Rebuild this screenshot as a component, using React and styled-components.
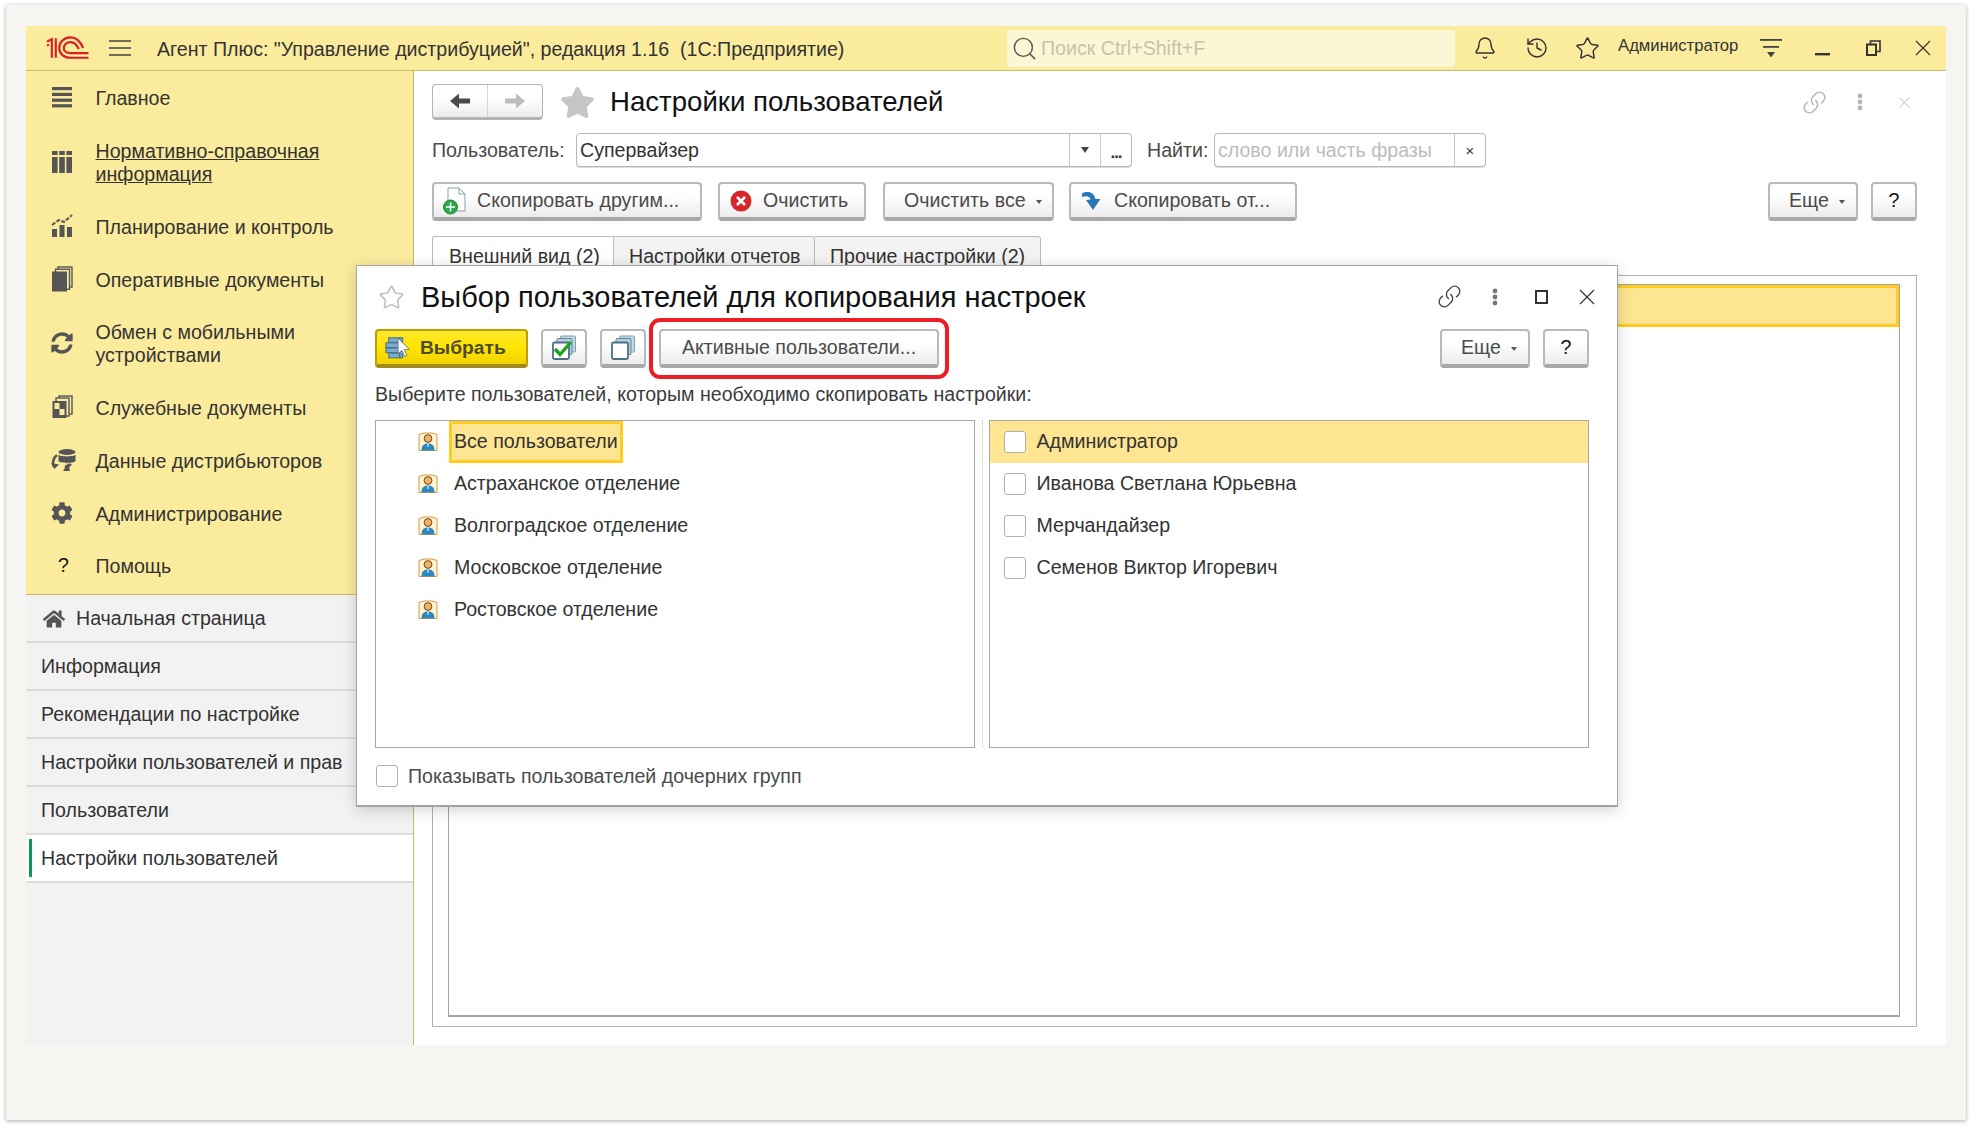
import React from "react";
import styled, { createGlobalStyle } from "styled-components";
import { Bell, History, Star, Link as LinkIcon, Search } from "lucide-react";
import { FaCog, FaHome, FaStar, FaSyncAlt } from "react-icons/fa";

const Global = createGlobalStyle`
  html, body { margin: 0; padding: 0; background: #fff; }
  * { box-sizing: border-box; }
  body { font-family: "Liberation Sans", Arial, sans-serif; font-size: 19.6px; color: #333; }
`;

const Page = styled.div`
  width: 1972px; height: 1126px; padding: 5px 6px 6px; background: #fff; overflow: hidden;
`;
const Paper = styled.div`
  width: 1960px; height: 1115px; background: #f6f5f2; padding: 21px 20px 75px;
  box-shadow: 0 1px 4px rgba(0,0,0,.35);
`;
const AppFrame = styled.div`
  position: relative; width: 1920px; height: 1019px; display: flex; flex-direction: column; background: #fff;
`;

/* header */
const Header = styled.header`
  height: 45px; flex: none; display: flex; align-items: center; background: #fbeb9d;
  border-bottom: 1px solid #cdbb6c; padding-left: 20px;
`;
const BurgerSlot = styled.div`margin-left: 20px; width: 22px; height: 18px; flex: none; display: flex;`;
const AppTitle = styled.div`
  margin-left: 26px; width: 850px; flex: none; padding-top: 2px; color: #333; white-space: pre;
`;
const SearchBox = styled.div`
  width: 448px; height: 37px; flex: none; background: #fdf6d5; border-radius: 2px; display: flex; align-items: center; padding: 1px 0 0 4px; gap: 3px;
  color: #c6c2ae;
`;
const HeadIcons = styled.div`
  flex: 1; display: flex; align-items: center; height: 100%; color: #333;
`;
const HeadSlot = styled.div`
  width: ${p => p.$w}px; padding-left: ${p => p.$pl || 0}px; flex: none; display: flex; justify-content: center; align-items: center;
`;
const UserName = styled.div`
  width: 142px; margin-left: 3px; flex: none; font-size: 16.7px; color: #333; white-space: nowrap; position: relative; top: -2px;
`;

/* body */
const Body = styled.div`flex: 1; display: flex; min-height: 0;`;
const Sidebar = styled.aside`
  width: 388px; flex: none; display: flex; flex-direction: column; background: #f2f2f2;
  border-right: 1px solid #c6b76f;
`;
const MainMenu = styled.nav`
  background: #fbeb9d; border-bottom: 1px solid #c6b76f; height: 524px; flex: none;
`;
const MenuItem = styled.div`
  height: ${p => (p.$tall ? 75.6 : 52.8)}px; display: flex; align-items: center; color: #333; line-height: 23px;
`;
const MenuIcon = styled.div`
  width: 69.5px; padding-left: 25px; flex: none; display: flex; align-items: center; height: 24px; color: #555;
`;
const MenuText = styled.div`
  padding-top: 3px;
  text-decoration: ${p => (p.$link ? "underline" : "none")};
`;
const SectionRow = styled.div`
  height: 48px; flex: none; display: flex; align-items: center; padding: 1px 0 0 ${p => (p.$home ? 17 : 15)}px;
  border-bottom: 2px solid #dcdcdc; color: #333; gap: 11px; position: relative; white-space: nowrap;
  background: ${p => (p.$active ? "#fff" : "transparent")};
`;
const ActiveMark = styled.span`
  position: absolute; left: 3px; top: 4px; bottom: 4px; width: 3px; background: #0a9a50;
`;
const HelpGlyph = styled.span`margin-left: 7px; color: #111;`;

/* main */
const Main = styled.main`
  flex: 1; min-width: 0; display: flex; flex-direction: column; background: #fff; padding: 13px 29px 18px 18px;
`;
const TitleRow = styled.div`height: 36px; flex: none; display: flex; align-items: center;`;
const NavGroup = styled.div`
  width: 111px; height: 36px; display: flex; border: 1px solid #b4b4b4; border-bottom: 3px solid #b4b4b4; border-radius: 4px;
  background: linear-gradient(#fff 40%, #ececec);
`;
const NavBtn = styled.div`
  flex: 1; display: flex; align-items: center; justify-content: center;
  & + & { border-left: 1px solid #d4d4d4; }
`;
const StarSlot = styled.div`
  margin-left: 14px; width: 40px; display: flex; justify-content: center; color: #c6c6c6;
`;
const PageTitle = styled.h1`
  margin: 0 0 0 13px; font-weight: 400; font-size: 27.6px; color: #111; flex: 1; white-space: nowrap;
`;
const Tools = styled.div`
  display: flex; align-items: center; flex: none; color: ${p => p.$color}; margin-right: ${p => p.$mr}px; padding-bottom: ${p => p.$pb || 0}px;
`;
const ToolSlot = styled.div`
  width: ${p => p.$w}px; display: flex; justify-content: center; align-items: center;
`;
const LinkGlyph = styled(LinkIcon)`
  transform: scaleX(-1) rotate(-90deg);
`;
const FieldRow = styled.div`
  height: 34px; flex: none; margin-top: 13px; display: flex; align-items: center; color: #4a4a4a;
`;
const Label = styled.span`width: ${p => p.$w}px; margin-left: ${p => p.$ml || 0}px; flex: none; white-space: nowrap; padding-top: 1px;`;
const Field = styled.div`
  width: ${p => p.$w}px; height: 34px; flex: none; display: flex; align-items: stretch; border: 1px solid #b7b7b7; border-radius: 4px; background: #fff;
  box-shadow: 0 1px 0 #ddd;
`;
const FieldValue = styled.div`
  flex: 1; min-width: 0; padding: 1px 0 0 3px; display: flex; align-items: center; color: ${p => (p.$ph ? "#bcbcbc" : "#333")}; white-space: nowrap;
`;
const FieldBtn = styled.div`
  width: ${p => p.$w}px; flex: none; border-left: 1px solid #c8c8c8; display: flex; align-items: center; justify-content: center; font-size: 15px; color: #333;
`;
const TinyArrow = styled.i`
  display: block; width: 0; height: 0; border: 4px solid transparent; border-top: 6px solid #444; border-bottom: 0;
`;
const Ellipsis = styled.span`font-size: 17px; font-weight: 700; position: relative; top: 3px; letter-spacing: -1px;`;
const CommandRow = styled.div`
  flex: none; margin-top: 15px; height: 39px; display: flex; align-items: stretch;
`;
const Btn = styled.div`
  width: ${p => p.$w}px; flex: none; margin-left: ${p => p.$ml || 0}px; display: flex; align-items: center; justify-content: ${p => (p.$center ? "center" : "flex-start")};
  padding-left: ${p => p.$pl || 0}px; gap: ${p => p.$gap || 0}px;
  border: 2px solid #b9b9b9; border-bottom: 4px solid #a8a8a8; border-radius: 4px;
  background: linear-gradient(#fff 35%, #ececec); color: #4b4b4b; white-space: nowrap;
`;
const PrimaryBtn = styled(Btn)`
  background: linear-gradient(#ffe92e 0%, #ffe400 50%, #f2d200 100%);
  border: 2px solid #b89f0a; border-bottom: 4px solid #a08b1a; font-weight: 700; font-size: 19.2px; color: #4b4b36;
`;
const Spacer = styled.div`flex: 1;`;
const Caret = styled.i`
  display: inline-block; width: 0; height: 0; border: 3.5px solid transparent; border-top: 4px solid #555; border-bottom: 0; margin-left: 10px; position: relative; top: 1px;
`;
const QMark = styled.span`color: #111;`;
const Tabs = styled.div`
  flex: none; margin-top: 15px; height: 40px; display: flex; margin-bottom: -1px; position: relative; z-index: 1;
`;
const Tab = styled.div`
  width: ${p => p.$w}px; flex: none; padding: 8px 0 0 ${p => (p.$active ? 16 : 15)}px;
  background: ${p => (p.$active ? "#fff" : "#f2f2f2")}; color: #333;
  border: 1px solid #bcbcbc; border-left-width: ${p => (p.$active ? 1 : 0)}px;
  border-bottom: ${p => (p.$active ? "1px solid #fff" : "1px solid #bcbcbc")};
  border-radius: ${p => (p.$active ? "3px 0 0 0" : "0 3px 0 0")};
  white-space: nowrap;
`;
const TabPanel = styled.div`
  flex: 1; min-height: 0; border: 1px solid #b0b0b0; padding: 8px 16px 9px 15px; display: flex;
`;
const InnerTable = styled.div`flex: 1; border: 1px solid #a4a4a4; border-bottom-width: 2px;`;
const SelectedWide = styled.div`height: 42px; background: #fde591; border: 3px solid #ffcb1f;`;

/* dialog */
const Dialog = styled.section`
  position: absolute; left: 330px; top: 239px; width: 1262px; height: 542px; z-index: 5; background: #fff;
  border: 1px solid #a3a3a3; border-bottom-width: 2px; box-shadow: 0 3px 14px rgba(0,0,0,.18);
  padding: 0 28px 0 18px; display: flex; flex-direction: column;
`;
const DialogHead = styled.div`height: 63px; flex: none; display: flex; align-items: center; padding-left: 3px;`;
const DialogTitle = styled.h2`
  margin: 0 0 0 16px; font-weight: 400; font-size: 29px; color: #111; flex: 1; white-space: nowrap;
`;
const DialogToolbar = styled.div`height: 39px; flex: none; display: flex; align-items: stretch;`;
const HighlightWrap = styled.div`
  position: relative; display: flex; margin-left: 13px;
`;
const RedFrame = styled.div`
  position: absolute; left: -10px; right: -10px; top: -11px; bottom: -11px; border: 4px solid #ee1c25; border-radius: 11px; pointer-events: none;
`;
const Hint = styled.div`
  flex: none; margin-top: 15px; height: 23px; line-height: 23px; color: #3c3c3c; white-space: nowrap;
`;
const Columns = styled.div`
  flex: none; margin-top: 14px; height: 328px; display: flex; justify-content: space-between;
`;
const ListBox = styled.div`
  width: ${p => p.$w}px; border: 1px solid #a8a8a8; display: flex; flex-direction: column;
`;
const Splitter = styled.div`
  width: 0; margin-left: 7px; margin-right: 6px; border-left: 1px dotted #c4c4c4;
`;
const GroupRow = styled.div`
  height: 42px; flex: none; display: flex; align-items: center; padding-left: 42px; gap: 16px;
`;
const GroupText = styled.div`
  white-space: nowrap; padding-bottom: 1px;
  ${p => p.$sel && "background:#fde591; border:3px solid #ffcb1f; height: 42px; line-height: 35px; margin-left: -5px; padding-left: 2px; width: 174px;"}
`;
const UserRow = styled.div`
  height: 42px; flex: none; display: flex; align-items: center; padding: 0 0 1px 14px; gap: 11px; background: ${p => (p.$sel ? "#fde591" : "transparent")};
`;
const Check = styled.div`
  width: 22px; height: 22px; flex: none; border: 1px solid #b0b0b0; border-radius: 3px; background: #fff;
`;
const FooterRow = styled.div`
  flex: none; height: 28px; margin-top: 14px; display: flex; align-items: center; padding-left: 1px; gap: 10px; color: #4a4a4a;
`;

/* drawings */
const Logo1C = () => (
  <svg width="44" height="24" viewBox="0 0 44 24" fill="none" stroke="#dc1f26" strokeWidth="2.2">
    <path d="M1 5.5 L6 3 V22" />
    <path d="M1 9.5 L3 8.6" />
    <path d="M10 2 V22" />
    <path d="M38 12 C35 5 30 1.2 25 1.2 C18.5 1.2 13.5 6 13.5 12 C13.5 18 18.5 22 25 22 H43.5" />
    <path d="M33.5 13 C31.5 8.5 28.5 6 25 6 C21 6 18.2 8.8 18.2 12 C18.2 15.2 21 17.3 25 17.3 H43.5" />
  </svg>
);
const Burger = () => (
  <svg width="22" height="18" viewBox="0 0 22 18" stroke="#444" strokeWidth="1.6">
    <path d="M0 2 H22 M0 9 H22 M0 16 H22" />
  </svg>
);
const MenuList = () => (
  <svg width="22" height="22" viewBox="0 0 22 22" fill="#555">
    <rect x="1" y="1" width="20" height="3.2" /><rect x="1" y="6.8" width="20" height="3.2" /><rect x="1" y="12.6" width="20" height="3.2" /><rect x="1" y="18.2" width="20" height="3.2" />
  </svg>
);
const MenuTable = () => (
  <svg width="22" height="24" viewBox="0 0 22 24" fill="#555">
    <rect x="1" y="1" width="5.6" height="4" /><rect x="8.2" y="1" width="5.6" height="4" /><rect x="15.4" y="1" width="5.6" height="4" />
    <rect x="1" y="7" width="5.6" height="16" /><rect x="8.2" y="7" width="5.6" height="16" /><rect x="15.4" y="7" width="5.6" height="16" />
  </svg>
);
const MenuChart = () => (
  <svg width="22" height="24" viewBox="0 0 22 24" fill="#555">
    <rect x="1" y="15" width="5" height="8" /><rect x="8.5" y="11" width="5" height="12" /><rect x="16" y="13" width="5" height="10" />
    <path d="M1 11 L8 6 L13 8 L21 1" fill="none" stroke="#555" strokeWidth="2" strokeDasharray="4 1.5" />
  </svg>
);
const MenuDocs = () => (
  <svg width="22" height="26" viewBox="0 0 22 26" fill="none">
    <rect x="7" y="1" width="14" height="20" stroke="#555" strokeWidth="1.4" />
    <rect x="4.5" y="3.2" width="14" height="20" stroke="#555" strokeWidth="1.4" fill="#fbeb9d" />
    <rect x="1" y="5.5" width="15" height="20" fill="#555" />
  </svg>
);
const MenuService = () => (
  <svg width="22" height="24" viewBox="0 0 22 24" fill="none">
    <rect x="8" y="1" width="13" height="18" stroke="#555" strokeWidth="1.4" />
    <rect x="5" y="3" width="13" height="18" stroke="#555" strokeWidth="1.4" fill="#fbeb9d" />
    <rect x="1.5" y="6" width="14" height="17" fill="#555" />
    <rect x="3.5" y="8" width="5" height="6" fill="#fbeb9d" />
    <rect x="8.5" y="14" width="5" height="6" fill="#fbeb9d" />
  </svg>
);
const MenuData = () => (
  <svg width="26" height="24" viewBox="0 0 26 24" fill="none">
    <ellipse cx="16" cy="4" rx="8.5" ry="3" fill="#555" />
    <path d="M7.5 6.5 C9 9 23 9 24.5 6.5 V13 C23 15.5 9 15.5 7.5 13 Z" fill="#555" />
    <path d="M6 7 C2 10 1 15 3 19" stroke="#555" strokeWidth="2.6" />
    <path d="M0 15 L3.5 21 L8 16.5 Z" fill="#555" />
    <path d="M14 18 C16 19 18 18 20 16" stroke="#555" strokeWidth="2.6" />
    <path d="M12 23 L19 23 L17 15 Z" fill="#555" />
  </svg>
);
const Arrow = () => (
  <svg width="22" height="18" viewBox="0 0 22 18" fill="#4a4a4a">
    <path d="M1 9 L10 1.5 V6.5 H21 V11.5 H10 V16.5 Z" />
  </svg>
);
const ArrowR = () => (
  <svg width="22" height="18" viewBox="0 0 22 18" fill="#bcbcbc">
    <path d="M21 9 L12 1.5 V6.5 H1 V11.5 H12 V16.5 Z" />
  </svg>
);
const Dots = ({ color }) => (
  <svg width="6" height="18" viewBox="0 0 6 18" fill={color}>
    <circle cx="3" cy="3" r="2.4" /><circle cx="3" cy="9" r="2.4" /><circle cx="3" cy="15" r="2.4" />
  </svg>
);
const ThinX = ({ size, color }) => (
  <svg width={size} height={size} viewBox="0 0 16 16" stroke={color} strokeWidth="1.2" fill="none">
    <path d="M1 1 L15 15 M15 1 L1 15" />
  </svg>
);
const FilterLines = () => (
  <svg width="22" height="20" viewBox="0 0 22 20" fill="#444">
    <rect x="0" y="1" width="22" height="1.8" /><rect x="3" y="8" width="16" height="1.8" />
    <path d="M7 14 H15 L11 19.5 Z" />
  </svg>
);
const Minimize = () => <svg width="15" height="16" viewBox="0 0 15 16"><rect y="13" width="15" height="2.4" fill="#333" /></svg>;
const Restore = () => (
  <svg width="15" height="16" viewBox="0 0 15 16" fill="none" stroke="#333">
    <rect x="1" y="4.5" width="9" height="10.5" strokeWidth="2" />
    <path d="M4.5 4 V1 H14 V11.5 H11" strokeWidth="1.6" />
  </svg>
);
const Maximize = () => (
  <svg width="13" height="14" viewBox="0 0 13 14" fill="none" stroke="#333" strokeWidth="2"><rect x="1" y="1" width="11" height="12" /></svg>
);
const DocPlus = () => (
  <svg width="24" height="28" viewBox="0 0 24 28" fill="none">
    <path d="M5 1 H16 L22 7 V24 H5 Z" fill="#fff" stroke="#8aa0ad" />
    <path d="M16 1 V7 H22" stroke="#8aa0ad" />
    <circle cx="7.5" cy="20" r="7" fill="#2fa84a" stroke="#1f8a39" />
    <path d="M7.5 15.5 V24.5 M3 20 H12" stroke="#fff" strokeWidth="1.5" />
  </svg>
);
const RedX = () => (
  <svg width="22" height="22" viewBox="0 0 22 22">
    <circle cx="11" cy="11" r="10.5" fill="#d7252c" />
    <path d="M7 7 L15 15 M15 7 L7 15" stroke="#fff" strokeWidth="2.6" />
  </svg>
);
const BlueTurn = () => (
  <svg width="22" height="22" viewBox="0 0 22 22">
    <path d="M1 3.5 C7 0.5 13 2 14.5 9 L19.5 9 L12 20 L5 10 L9.5 9.5 C9 6.5 5 5.5 1 7 Z" fill="#2878b5" />
  </svg>
);
const SelectIcon = () => (
  <svg width="28" height="24" viewBox="0 0 30 24">
    <g fill="#7cabcd" stroke="#3d6c8e">
      <rect x="4" y="1" width="12" height="5" /><rect x="1" y="6.5" width="15" height="5" /><rect x="1" y="12" width="15" height="5" /><rect x="4" y="17.5" width="12" height="5" />
      <rect x="16" y="1" width="3" height="21.5" />
    </g>
    <path d="M14 1.5 V18 L18 14.5 L21 21 L23.5 20 L20.5 13.5 L26 13.5 Z" fill="#fff" stroke="#777" strokeWidth="1" />
  </svg>
);
const StackCheck = () => (
  <svg width="26" height="26" viewBox="0 0 26 26" fill="none">
    <rect x="9.5" y="1" width="15" height="16" rx="1" fill="#c5d6e1" stroke="#7fa0b5" />
    <rect x="6" y="3.5" width="15" height="16" rx="1" fill="#b9cedb" stroke="#5f89a3" />
    <rect x="2" y="7.5" width="16" height="16.5" rx="1.5" fill="#fff" stroke="#4c6f86" strokeWidth="1.8" />
    <path d="M4 14 L9 19.5 L20 7" stroke="#1da41f" strokeWidth="3.4" />
  </svg>
);
const StackPlain = () => (
  <svg width="26" height="26" viewBox="0 0 26 26" fill="none">
    <rect x="9.5" y="1" width="15" height="16" rx="1" fill="#c5d6e1" stroke="#7fa0b5" />
    <rect x="6" y="3.5" width="15" height="16" rx="1" fill="#b9cedb" stroke="#5f89a3" />
    <rect x="2" y="7.5" width="16" height="16.5" rx="1.5" fill="#fff" stroke="#4c6f86" strokeWidth="1.8" />
  </svg>
);
const PersonIcon = () => (
  <svg width="20" height="20" viewBox="0 0 20 20" fill="none">
    <path d="M1 2.5 L6 1 H14 L19 2.5 V18.5 H1 Z" fill="#fff3d2" stroke="#d89a3d" />
    <circle cx="10" cy="6.5" r="3.9" fill="#f0b060" stroke="#5a3d20" strokeWidth="0.9" />
    <path d="M3.5 18.5 C3.5 13 6.5 11.5 10 11.5 C13.5 11.5 16.5 13 16.5 18.5 Z" fill="#2c88c0" />
    <path d="M10 11.5 V15" stroke="#fff" strokeWidth="1" />
  </svg>
);

const groups = ["Все пользователи", "Астраханское отделение", "Волгоградское отделение", "Московское отделение", "Ростовское отделение"];
const users = ["Администратор", "Иванова Светлана Юрьевна", "Мерчандайзер", "Семенов Виктор Игоревич"];

export default function App() {
  return (
    <Page>
      <Global />
      <Paper>
        <AppFrame>
          <Header>
            <Logo1C />
            <BurgerSlot><Burger /></BurgerSlot>
            <AppTitle>{'Агент Плюс: "Управление дистрибуцией", редакция 1.16  (1С:Предприятие)'}</AppTitle>
            <SearchBox>
              <Search size={27} strokeWidth={1.3} color="#555" />
              <span>Поиск Ctrl+Shift+F</span>
            </SearchBox>
            <HeadIcons>
              <HeadSlot $w={60}><Bell size={24} strokeWidth={1.4} /></HeadSlot>
              <HeadSlot $w={44}><History size={24} strokeWidth={1.4} /></HeadSlot>
              <HeadSlot $w={56}><Star size={25} strokeWidth={1.4} /></HeadSlot>
              <UserName>Администратор</UserName>
              <HeadSlot $w={22}><FilterLines /></HeadSlot>
              <HeadSlot $w={80}><Minimize /></HeadSlot>
              <HeadSlot $w={22}><Restore /></HeadSlot>
              <HeadSlot $w={62} $pl={16}><ThinX size={16} color="#333" /></HeadSlot>
            </HeadIcons>
          </Header>
          <Body>
            <Sidebar>
              <MainMenu>
                <MenuItem><MenuIcon><MenuList /></MenuIcon><MenuText>Главное</MenuText></MenuItem>
                <MenuItem $tall><MenuIcon><MenuTable /></MenuIcon><MenuText $link>Нормативно-справочная<br />информация</MenuText></MenuItem>
                <MenuItem><MenuIcon><MenuChart /></MenuIcon><MenuText>Планирование и контроль</MenuText></MenuItem>
                <MenuItem><MenuIcon><MenuDocs /></MenuIcon><MenuText>Оперативные документы</MenuText></MenuItem>
                <MenuItem $tall><MenuIcon><FaSyncAlt size={22} /></MenuIcon><MenuText>Обмен с мобильными<br />устройствами</MenuText></MenuItem>
                <MenuItem><MenuIcon><MenuService /></MenuIcon><MenuText>Служебные документы</MenuText></MenuItem>
                <MenuItem><MenuIcon><MenuData /></MenuIcon><MenuText>Данные дистрибьюторов</MenuText></MenuItem>
                <MenuItem><MenuIcon><FaCog size={22} /></MenuIcon><MenuText>Администрирование</MenuText></MenuItem>
                <MenuItem><MenuIcon><HelpGlyph>?</HelpGlyph></MenuIcon><MenuText>Помощь</MenuText></MenuItem>
              </MainMenu>
              <SectionRow $home><FaHome size={22} color="#555" />Начальная страница</SectionRow>
              <SectionRow>Информация</SectionRow>
              <SectionRow>Рекомендации по настройке</SectionRow>
              <SectionRow>Настройки пользователей и прав</SectionRow>
              <SectionRow>Пользователи</SectionRow>
              <SectionRow $active><ActiveMark />Настройки пользователей</SectionRow>
            </Sidebar>
            <Main>
              <TitleRow>
                <NavGroup>
                  <NavBtn><Arrow /></NavBtn>
                  <NavBtn><ArrowR /></NavBtn>
                </NavGroup>
                <StarSlot><FaStar size={35} /></StarSlot>
                <PageTitle>Настройки пользователей</PageTitle>
                <Tools $color="#b5b5b5" $mr={-10}>
                  <ToolSlot $w={45}><LinkGlyph size={25} strokeWidth={1.4} /></ToolSlot>
                  <ToolSlot $w={45}><Dots color="#b5b5b5" /></ToolSlot>
                  <ToolSlot $w={45}><ThinX size={11} color="#b0b0b0" /></ToolSlot>
                </Tools>
              </TitleRow>
              <FieldRow>
                <Label $w={144}>Пользователь:</Label>
                <Field $w={556}>
                  <FieldValue>Супервайзер</FieldValue>
                  <FieldBtn $w={31}><TinyArrow /></FieldBtn>
                  <FieldBtn $w={31}><Ellipsis>...</Ellipsis></FieldBtn>
                </Field>
                <Label $w={67} $ml={15}>Найти:</Label>
                <Field $w={272}>
                  <FieldValue $ph>слово или часть фразы</FieldValue>
                  <FieldBtn $w={31}>×</FieldBtn>
                </Field>
              </FieldRow>
              <CommandRow>
                <Btn $w={270} $pl={9} $gap={10}><DocPlus />Скопировать другим...</Btn>
                <Btn $w={148} $ml={16} $pl={10} $gap={11}><RedX />Очистить</Btn>
                <Btn $w={171} $ml={17} $pl={19}>Очистить все<Caret /></Btn>
                <Btn $w={228} $ml={15} $pl={10} $gap={11}><BlueTurn />Скопировать от...</Btn>
                <Spacer />
                <Btn $w={90} $pl={19}>Еще<Caret /></Btn>
                <Btn $w={46} $ml={13} $center><QMark>?</QMark></Btn>
              </CommandRow>
              <Tabs>
                <Tab $active $w={182}>Внешний вид (2)</Tab>
                <Tab $w={201}>Настройки отчетов</Tab>
                <Tab $w={226}>Прочие настройки (2)</Tab>
              </Tabs>
              <TabPanel>
                <InnerTable><SelectedWide /></InnerTable>
              </TabPanel>
            </Main>
          </Body>
          <Dialog>
            <DialogHead>
              <Star size={27} strokeWidth={1.3} color="#b4bcc4" />
              <DialogTitle>Выбор пользователей для копирования настроек</DialogTitle>
              <Tools $color="#444" $mr={-21} $pb={2}>
                <ToolSlot $w={46}><LinkGlyph size={25} strokeWidth={1.3} /></ToolSlot>
                <ToolSlot $w={46}><Dots color="#777" /></ToolSlot>
                <ToolSlot $w={46}><Maximize /></ToolSlot>
                <ToolSlot $w={46}><ThinX size={16} color="#333" /></ToolSlot>
              </Tools>
            </DialogHead>
            <DialogToolbar>
              <PrimaryBtn $w={153} $pl={8} $gap={7}><SelectIcon />Выбрать</PrimaryBtn>
              <Btn $w={46} $ml={13} $center><StackCheck /></Btn>
              <Btn $w={46} $ml={13} $center><StackPlain /></Btn>
              <HighlightWrap>
                <Btn $w={280} $center>Активные пользователи...</Btn>
                <RedFrame />
              </HighlightWrap>
              <Spacer />
              <Btn $w={90} $pl={19}>Еще<Caret /></Btn>
              <Btn $w={46} $ml={13} $center><QMark>?</QMark></Btn>
            </DialogToolbar>
            <Hint>Выберите пользователей, которым необходимо скопировать настройки:</Hint>
            <Columns>
              <ListBox $w={600}>
                {groups.map((g, i) => (
                  <GroupRow key={g}><PersonIcon /><GroupText $sel={i === 0}>{g}</GroupText></GroupRow>
                ))}
              </ListBox>
              <Splitter />
              <ListBox $w={601}>
                {users.map((u, i) => (
                  <UserRow key={u} $sel={i === 0}><Check />{u}</UserRow>
                ))}
              </ListBox>
            </Columns>
            <FooterRow><Check />Показывать пользователей дочерних групп</FooterRow>
          </Dialog>
        </AppFrame>
      </Paper>
    </Page>
  );
}
